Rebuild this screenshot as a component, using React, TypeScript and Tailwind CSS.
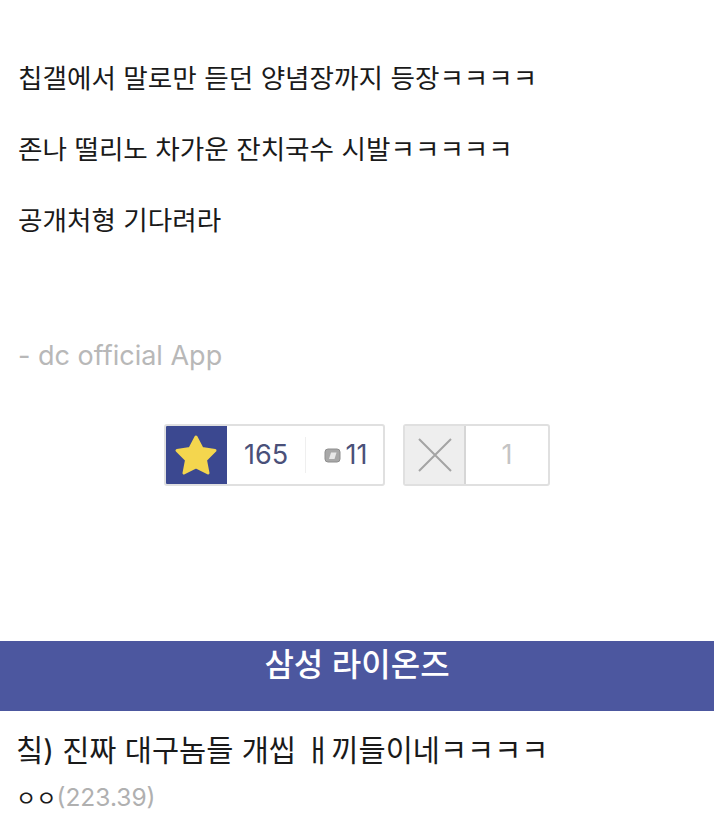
const cjk = "font-['Inter','Noto_Sans_CJK_KR',sans-serif]";

function Star() {
  return (
    <svg width="44" height="42" viewBox="0 0 44 42">
      <path
        d="M22 3 L28 14.500 L41 16.500 L31.500 26 L34 39 L22 33 L10 39 L12.500 26 L3 16.500 L16 14.500 Z"
        fill="#f4d64e"
        stroke="#f4d64e"
        strokeWidth="3"
        strokeLinejoin="round"
      />
    </svg>
  );
}

function Reply() {
  return (
    <svg width="17" height="15" viewBox="0 0 17 15">
      <rect x="1" y="1" width="15" height="13" rx="3" fill="#a8a8a8" stroke="#8e8e8e" />
      <path d="M5 11 L7 4.500 H12.500 L10.500 11 Z" fill="#e8e8e8" />
    </svg>
  );
}

export default function App() {
  return (
    <div className={`w-[714px] h-[814px] overflow-hidden bg-white ${cjk}`}>
      <div className="flex flex-col gap-[35px] pt-[60px] pl-[18px] text-[26.6px] leading-[36px] text-[#1a1a1a]">
        <p>칩갤에서 말로만 듣던 양념장까지 등장ㅋㅋㅋㅋ</p>
        <p>존나 떨리노 차가운 잔치국수 시발ㅋㅋㅋㅋㅋ</p>
        <p>공개처형 기다려라</p>
      </div>
      <p className="mt-[100px] pl-[18px] text-[27px] leading-[36px] text-[#b8b8b8]">- dc official App</p>
      <div className="mt-[50px] flex justify-center gap-[18px]">
        <div className="flex h-[62px] w-[221px] overflow-hidden rounded-[3px] border-2 border-[#e0e0e0]">
          <div className="-my-[2px] -ml-[2px] flex w-[63px] items-center justify-center bg-[#3b4890]">
            <Star />
          </div>
          <div className="flex flex-1 items-center text-[27px] text-[#4a5079]">
            <span className="w-[78px] text-center">165</span>
            <span className="h-[36px] w-px bg-[#efefef]" />
            <span className="flex flex-1 items-center justify-center gap-[5px] pl-[2px]">
              <Reply />
              11
            </span>
          </div>
        </div>
        <div className="flex h-[62px] w-[147px] overflow-hidden rounded-[3px] border-2 border-[#e0e0e0]">
          <div className="flex w-[61px] items-center justify-center border-r-2 border-[#d6d6d6] bg-[#eeeeee]">
            <svg width="34" height="34" viewBox="0 0 34 34">
              <path d="M1 1 L33 33 M33 1 L1 33" stroke="#a4a4a4" strokeWidth="2" fill="none" />
            </svg>
          </div>
          <div className="flex flex-1 items-center justify-center text-[27px] text-[#c4c4c4]">1</div>
        </div>
      </div>
      <div className="mt-[155px] h-[70px] bg-[#4c579f] text-center text-[32px] leading-[48px] font-medium text-white">
        삼성 라이온즈
      </div>
      <p className="mt-[21px] pl-[16px] text-[29.500px] leading-[36px] text-[#1a1a1a]">칰) 진짜 대구놈들 개씹 ㅐ끼들이네ㅋㅋㅋㅋ</p>
      <p className="mt-[12px] flex items-baseline pl-[16px] text-[24.500px] leading-[34px] text-[#1a1a1a]">
        <span className="text-[22px]">ㅇㅇ</span>
        <span className="text-[#b0b0b0]">(223.39)</span>
      </p>
    </div>
  );
}
